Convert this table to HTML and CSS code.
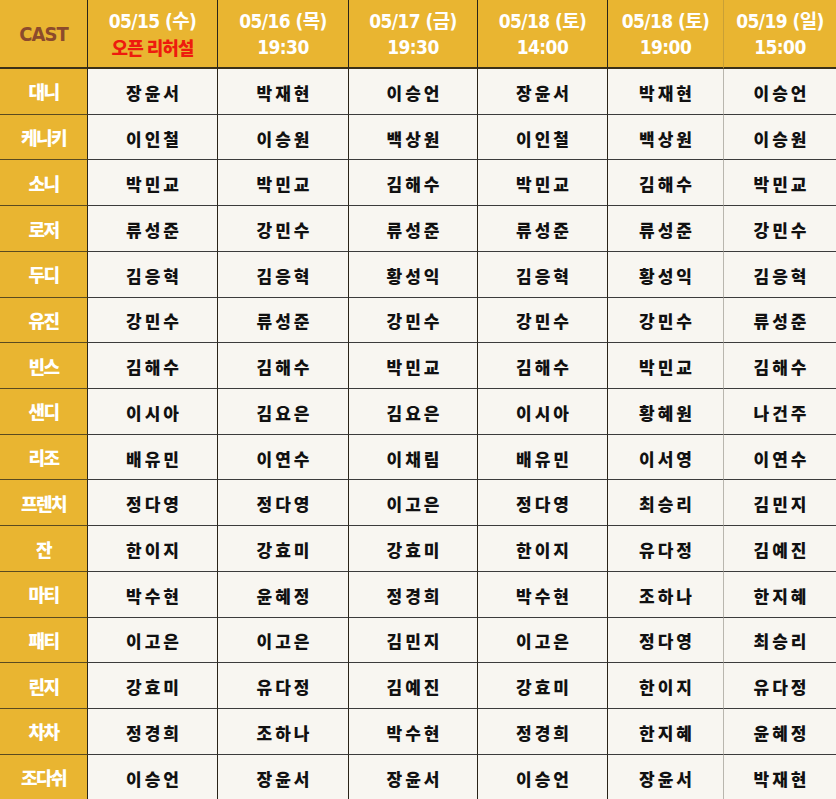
FILE: index.html
```
<!DOCTYPE html>
<html lang="ko">
<head>
<meta charset="utf-8">
<title>CAST</title>
<link rel="stylesheet" href="styles.css">
</head>
<body>
<div class="sheet" id="sheet">
  <div class="cell head cast">CAST</div>
  <div class="cell head"><span>05/15 (수)</span><span class="red">오픈 리허설</span></div>
  <div class="cell head"><span>05/16 (목)</span><span>19:30</span></div>
  <div class="cell head"><span>05/17 (금)</span><span>19:30</span></div>
  <div class="cell head"><span>05/18 (토)</span><span>14:00</span></div>
  <div class="cell head c5"><span>05/18 (토)</span><span>19:00</span></div>
  <div class="cell head last"><span>05/19 (일)</span><span>15:00</span></div>
</div>
<script src="app.js"></script>
</body>
</html>
```
FILE: app.js
```
var rows = [
  ["대니","장윤서","박재현","이승언","장윤서","박재현","이승언"],
  ["케니키","이인철","이승원","백상원","이인철","백상원","이승원"],
  ["소니","박민교","박민교","김해수","박민교","김해수","박민교"],
  ["로저","류성준","강민수","류성준","류성준","류성준","강민수"],
  ["두디","김응혁","김응혁","황성익","김응혁","황성익","김응혁"],
  ["유진","강민수","류성준","강민수","강민수","강민수","류성준"],
  ["빈스","김해수","김해수","박민교","김해수","박민교","김해수"],
  ["샌디","이시아","김요은","김요은","이시아","황혜원","나건주"],
  ["리조","배유민","이연수","이채림","배유민","이서영","이연수"],
  ["프렌치","정다영","정다영","이고은","정다영","최승리","김민지"],
  ["잔","한이지","강효미","강효미","한이지","유다정","김예진"],
  ["마티","박수현","윤혜정","정경희","박수현","조하나","한지혜"],
  ["패티","이고은","이고은","김민지","이고은","정다영","최승리"],
  ["린지","강효미","유다정","김예진","강효미","한이지","유다정"],
  ["차차","정경희","조하나","박수현","정경희","한지혜","윤혜정"],
  ["조다쉬","이승언","장윤서","장윤서","이승언","장윤서","박재현"]
];
var sheet = document.getElementById("sheet");
rows.forEach(function (r) {
  r.forEach(function (t, i) {
    var d = document.createElement("div");
    d.className = "cell " + (i === 0 ? "role" : "name") + (i === 5 ? " c5" : "") + (i === 6 ? " last" : "");
    d.textContent = t;
    sheet.appendChild(d);
  });
});
```
FILE: styles.css
```
html, body {
  margin: 0;
  padding: 0;
  background: #f8f6f1;
  overflow: hidden;
}
.sheet {
  display: grid;
  grid-template-columns: 88px 130px 131px 129px 130px 116px 112px;
  grid-template-rows: 69px repeat(16, 45.73px);
  width: 836px;
}
.cell {
  box-sizing: border-box;
  display: flex;
  flex-direction: column;
  align-items: center;
  justify-content: center;
  border-right: 1px solid #2a2418;
  border-bottom: 1px solid #3c3c3c;
}
.cell.c5 {
  border-right-color: #b9b6ae;
}
.cell.last {
  border-right: none;
}
.head {
  background: #e9b531;
  color: #ffffff;
  font-family: "DejaVu Sans Condensed", "DejaVu Sans", "Noto Sans CJK KR", sans-serif;
  font-stretch: condensed;
  font-weight: bold;
  font-size: 19px;
  line-height: 26px;
  letter-spacing: -0.6px;
  border-bottom: 2px solid #3a3018;
  padding-top: 1px;
}
.head.c5 {
  border-right-color: #c9a035;
}
.cast {
  color: #8c4a2c;
  font-size: 20px;
  letter-spacing: -1px;
}
.red {
  color: #ee1b0e;
  font-family: "Noto Sans CJK KR", sans-serif;
  font-weight: 900;
  font-size: 18px;
  letter-spacing: -1px;
}
.role {
  background: #e9b531;
  color: #ffffff;
  font-family: "Noto Sans CJK KR", sans-serif;
  font-weight: 900;
  font-size: 18px;
  letter-spacing: -1.5px;
  border-bottom-color: #5a4a20;
}
.name {
  background: #f8f6f1;
  color: #111111;
  font-family: "Noto Sans CJK KR", sans-serif;
  font-weight: 900;
  font-size: 17px;
  letter-spacing: 3px;
  padding-left: 3px;
  padding-top: 2px;
}
```
